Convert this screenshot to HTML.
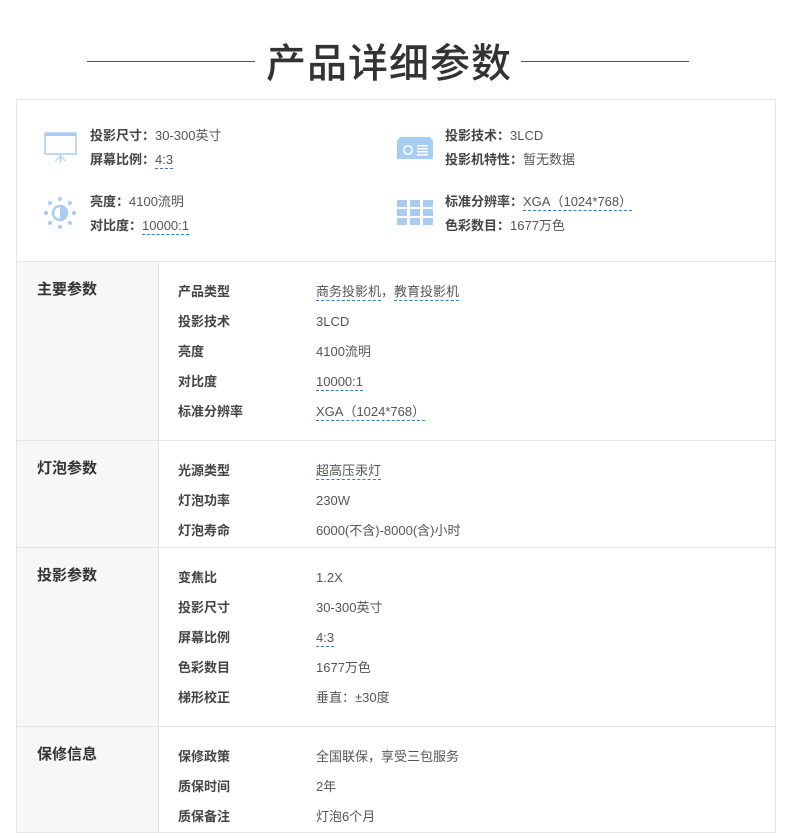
<!DOCTYPE html>
<html><head><meta charset="utf-8"><style>
*{margin:0;padding:0;box-sizing:border-box}
body{width:790px;height:838px;background:#fff;font-family:"Liberation Sans","Noto Sans CJK SC",sans-serif;color:#555;position:relative;overflow:hidden}
.a{position:absolute;white-space:nowrap;line-height:18px}
.a span,.a b{display:inline-block;line-height:16px;vertical-align:top}
.t{font-size:40px;font-weight:500;color:#333;left:266px;width:250px;text-align:left;top:32px;line-height:56px;letter-spacing:1px;font-family:"Noto Sans CJK SC",sans-serif}
.ln{position:absolute;top:61px;height:1px;background:#555}
.box{position:absolute;left:16px;top:99px;width:760px;height:734px;border:1px solid #e4e4e4}
.k{font-size:13px;font-weight:bold;color:#444}
.v{font-size:13px;color:#555}
.u{border-bottom:1px dashed #3a78c8}
.sec{position:absolute;left:16px;width:760px;border-top:1px solid #e4e4e4}
.lc{position:absolute;left:16px;width:143px;background:#f7f7f7;border-right:1px solid #e4e4e4}
.h{font-size:15px;font-weight:bold;color:#333;left:37px}
</style></head><body>
<div class="a t">产品详细参数</div>
<div class="ln" style="left:87px;width:168px"></div>
<div class="ln" style="left:521px;width:168px"></div>
<div class="lc" style="top:261px;height:571px"></div>
<div class="box"></div>

<svg class="a" style="left:44px;top:132px" width="34" height="32"><rect x="1" y="1" width="31" height="21" fill="none" stroke="#a9cdf2" stroke-width="1.5"/><rect x="1" y="1" width="31" height="3" fill="#a9cdf2"/><path d="M16.5 22v9M16.5 24l-5 5M16.5 24l5 5" stroke="#a9cdf2" stroke-width="1.2" fill="none"/></svg>
<svg class="a" style="left:43px;top:196px" width="34" height="34"><circle cx="17" cy="17" r="7" fill="none" stroke="#a9cdf2" stroke-width="2.5"/><path d="M17 10a7 7 0 0 1 0 14z" fill="#a9cdf2"/><g fill="#a9cdf2"><circle cx="17" cy="3" r="2"/><circle cx="17" cy="31" r="2"/><circle cx="3" cy="17" r="2"/><circle cx="31" cy="17" r="2"/><circle cx="7" cy="7" r="2"/><circle cx="27" cy="7" r="2"/><circle cx="7" cy="27" r="2"/><circle cx="27" cy="27" r="2"/></g></svg>
<svg class="a" style="left:397px;top:137px" width="36" height="22"><path d="M3 0h30l3 4v18H0V4z" fill="#a9cdf2"/><circle cx="11" cy="13" r="5" fill="#fff"/><circle cx="11" cy="13" r="3.5" fill="#a9cdf2"/><g fill="#fff"><rect x="20" y="8" width="11" height="1.5"/><rect x="20" y="11" width="11" height="1.5"/><rect x="20" y="14" width="11" height="1.5"/><rect x="20" y="17" width="11" height="1.5"/></g></svg>
<svg class="a" style="left:397px;top:200px" width="36" height="26"><g fill="#a9cdf2"><rect x="0" y="0" width="10" height="7"/><rect x="13" y="0" width="10" height="7"/><rect x="26" y="0" width="10" height="7"/><rect x="0" y="9" width="10" height="7"/><rect x="13" y="9" width="10" height="7"/><rect x="26" y="9" width="10" height="7"/><rect x="0" y="18" width="10" height="7"/><rect x="13" y="18" width="10" height="7"/><rect x="26" y="18" width="10" height="7"/></g></svg>

<div class="a v" style="left:90px;top:128px"><b class="k">投影尺寸：</b><span>30-300英寸</span></div>
<div class="a v" style="left:90px;top:152px"><b class="k">屏幕比例：</b><span class="u">4:3</span></div>
<div class="a v" style="left:90px;top:194px"><b class="k">亮度：</b><span>4100流明</span></div>
<div class="a v" style="left:90px;top:218px"><b class="k">对比度：</b><span class="u">10000:1</span></div>
<div class="a v" style="left:445px;top:128px"><b class="k">投影技术：</b><span>3LCD</span></div>
<div class="a v" style="left:445px;top:152px"><b class="k">投影机特性：</b><span>暂无数据</span></div>
<div class="a v" style="left:445px;top:194px"><b class="k">标准分辨率：</b><span class="u">XGA（1024*768）</span></div>
<div class="a v" style="left:445px;top:218px"><b class="k">色彩数目：</b><span>1677万色</span></div>

<div class="sec" style="top:261px"></div>
<div class="sec" style="top:440px"></div>
<div class="sec" style="top:547px"></div>
<div class="sec" style="top:726px"></div>

<div class="a h" style="top:281px">主要参数</div>
<div class="a h" style="top:460px">灯泡参数</div>
<div class="a h" style="top:567px">投影参数</div>
<div class="a h" style="top:746px">保修信息</div>

<div class="a k" style="left:178px;top:283px">产品类型</div><div class="a v" style="left:316px;top:284px"><span class="u">商务投影机</span><span>，</span><span class="u">教育投影机</span></div>
<div class="a k" style="left:178px;top:313px">投影技术</div><div class="a v" style="left:316px;top:314px"><span>3LCD</span></div>
<div class="a k" style="left:178px;top:343px">亮度</div><div class="a v" style="left:316px;top:344px"><span>4100流明</span></div>
<div class="a k" style="left:178px;top:373px">对比度</div><div class="a v" style="left:316px;top:374px"><span class="u">10000:1</span></div>
<div class="a k" style="left:178px;top:403px">标准分辨率</div><div class="a v" style="left:316px;top:404px"><span class="u">XGA（1024*768）</span></div>

<div class="a k" style="left:178px;top:462px">光源类型</div><div class="a v" style="left:316px;top:463px"><span class="u">超高压汞灯</span></div>
<div class="a k" style="left:178px;top:492px">灯泡功率</div><div class="a v" style="left:316px;top:493px"><span>230W</span></div>
<div class="a k" style="left:178px;top:522px">灯泡寿命</div><div class="a v" style="left:316px;top:523px"><span>6000(不含)-8000(含)小时</span></div>

<div class="a k" style="left:178px;top:569px">变焦比</div><div class="a v" style="left:316px;top:570px"><span>1.2X</span></div>
<div class="a k" style="left:178px;top:599px">投影尺寸</div><div class="a v" style="left:316px;top:600px"><span>30-300英寸</span></div>
<div class="a k" style="left:178px;top:629px">屏幕比例</div><div class="a v" style="left:316px;top:630px"><span class="u">4:3</span></div>
<div class="a k" style="left:178px;top:659px">色彩数目</div><div class="a v" style="left:316px;top:660px"><span>1677万色</span></div>
<div class="a k" style="left:178px;top:689px">梯形校正</div><div class="a v" style="left:316px;top:690px"><span>垂直：±30度</span></div>

<div class="a k" style="left:178px;top:748px">保修政策</div><div class="a v" style="left:316px;top:749px"><span>全国联保，享受三包服务</span></div>
<div class="a k" style="left:178px;top:778px">质保时间</div><div class="a v" style="left:316px;top:779px"><span>2年</span></div>
<div class="a k" style="left:178px;top:808px">质保备注</div><div class="a v" style="left:316px;top:809px"><span>灯泡6个月</span></div>
</body></html>
